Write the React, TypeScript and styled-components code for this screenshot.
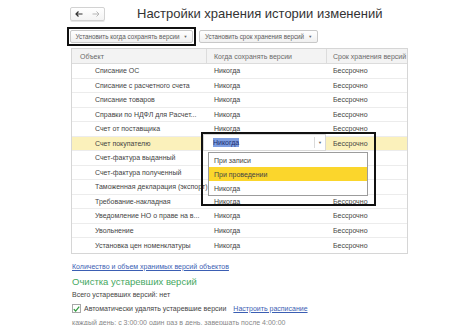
import React from "react";
import styled, { createGlobalStyle } from "styled-components";

const Global = createGlobalStyle`
  html, body { margin: 0; padding: 0; background: #fff; }
  body { font-family: "Liberation Sans", Arial, sans-serif; }
  * { box-sizing: border-box; }
`;

const Page = styled.div`
  width: 474px;
  height: 325px;
  overflow: hidden;
  padding: 6px 0 0 70px;
  display: flex;
  flex-direction: column;
  align-items: flex-start;
`;

const TopBar = styled.div`
  display: flex;
  align-items: center;
  height: 15px;
`;

const NavGroup = styled.div`
  display: flex;
  width: 35px;
  height: 14px;
  border: 1px solid #d2d2d2;
  border-radius: 2px;
  background: linear-gradient(#ffffff, #f3f3f3);
  box-shadow: 0 1px 0 #e6e6e6;
`;

const NavBtn = styled.span`
  flex: 1;
  display: flex;
  align-items: center;
  justify-content: center;
`;

const Title = styled.h1`
  margin: 0 0 0 32px;
  font-size: 13px;
  font-weight: normal;
  color: #333;
  white-space: nowrap;
`;

const Toolbar = styled.div`
  display: flex;
  align-items: center;
  gap: 3px;
  margin: 6px 0 0 -3px;
`;

const FocusBox = styled.div`
  display: flex;
  padding: 1px;
  border: 2px solid #111;
`;

const Button = styled.div<{ $w: number }>`
  width: ${(p) => p.$w}px;
  height: 13px;
  display: flex;
  align-items: center;
  justify-content: center;
  gap: 4px;
  border: 1px solid #c8c8c8;
  border-radius: 2px;
  background: linear-gradient(#ffffff, #f0f0f0);
  font-size: 6.3px;
  color: #5a5a5a;
  white-space: nowrap;
`;

const Caret = styled.span`
  font-size: 4px;
  color: #666;
`;

const TableWrap = styled.div`
  position: relative;
  margin: 2px 0 0 1px;
`;

const Table = styled.div`
  width: 337px;
  border: 1px solid #d6d6d6;
  display: flex;
  flex-direction: column;
`;

const Row = styled.div<{ $head?: boolean; $sel?: boolean }>`
  display: grid;
  grid-template-columns: 134px 120px 1fr;
  height: ${(p) => (p.$head ? "15px" : "14.5px")};
  border-bottom: 1px solid ${(p) => (p.$head ? "#dcdcdc" : "#ececec")};
  background: ${(p) => (p.$head ? "#f3f3f3" : p.$sel ? "#fbf1bb" : "#fff")};
  font-size: 7px;
  color: ${(p) => (p.$head ? "#6a6a6a" : "#444")};
  &:last-child { border-bottom: none; }
`;

const Cell = styled.div<{ $pad: number; $div?: boolean; $covered?: boolean }>`
  display: flex;
  align-items: center;
  padding-left: ${(p) => p.$pad}px;
  white-space: nowrap;
  border-left: ${(p) => (p.$div ? "1px solid #dcdcdc" : "none")};
  visibility: ${(p) => (p.$covered ? "hidden" : "visible")};
`;

const EditFrame = styled.div`
  position: absolute;
  left: 130px;
  top: 84px;
  width: 175px;
  height: 74px;
  border: 2px solid #111;
`;

const Input = styled.div`
  position: absolute;
  left: 0;
  top: 0;
  width: 123px;
  height: 17px;
  background: #fff;
  border: 1px solid #d8d8d8;
  display: flex;
  align-items: center;
  font-size: 7px;
`;

const InputText = styled.div`
  flex: 1;
  padding-left: 9px;
  display: flex;
  align-items: center;
`;

const Selected = styled.span`
  background: #7d9de0;
  color: #1c2d70;
  padding: 1px 0;
`;

const InputArrow = styled.div`
  width: 11px;
  height: 11px;
  border-left: 1px solid #dadada;
  display: flex;
  align-items: center;
  justify-content: center;
  font-size: 4px;
  color: #666;
`;

const List = styled.div`
  position: absolute;
  left: 5px;
  top: 18px;
  width: 160px;
  height: 44px;
  background: #fff;
  border: 1px solid #9c9c9c;
  display: flex;
  flex-direction: column;
  justify-content: center;
`;

const ListItem = styled.div<{ $active?: boolean }>`
  height: 14px;
  display: flex;
  align-items: center;
  padding-left: 5px;
  font-size: 7px;
  color: #444;
  background: ${(p) => (p.$active ? "#fbd62c" : "transparent")};
`;

const Bottom = styled.div`
  display: flex;
  flex-direction: column;
  margin: 7px 0 0 2px;
`;

const Link = styled.a<{ $gap?: number }>`
  font-size: 7px;
  color: #3b5eb3;
  text-decoration: underline;
  line-height: 12px;
  white-space: nowrap;
  cursor: pointer;
  margin-left: ${(p) => p.$gap ?? 0}px;
`;

const SectionTitle = styled.div`
  font-size: 9.5px;
  color: #45a861;
  line-height: 15px;
  margin-top: 1px;
`;

const Note = styled.div<{ $muted?: boolean }>`
  font-size: 7px;
  line-height: ${(p) => (p.$muted ? "13px" : "12px")};
  color: ${(p) => (p.$muted ? "#888" : "#444")};
  white-space: nowrap;
`;

const CheckLine = styled.div`
  display: flex;
  align-items: center;
  gap: 3px;
  height: 14px;
  margin-top: 1px;
  font-size: 7px;
  color: #444;
  white-space: nowrap;
`;

const Check = styled.span`
  width: 9px;
  height: 9px;
  border: 1px solid #a8a8a8;
  background: #fff;
  display: flex;
  align-items: center;
  justify-content: center;
`;

type R = { name: string; sel?: boolean; covered?: boolean };

const rows: R[] = [
  { name: "Списание ОС" },
  { name: "Списание с расчетного счета" },
  { name: "Списание товаров" },
  { name: "Справки по НДФЛ для Расчет..." },
  { name: "Счет от поставщика" },
  { name: "Счет покупателю", sel: true },
  { name: "Счет-фактура выданный", covered: true },
  { name: "Счет-фактура полученный", covered: true },
  { name: "Таможенная декларация (экспорт)", covered: true },
  { name: "Требование-накладная" },
  { name: "Уведомление НО о праве на в..." },
  { name: "Увольнение" },
  { name: "Установка цен номенклатуры" },
];

const Arrow = ({ dir, color }: { dir: "left" | "right"; color: string }) => (
  <svg width="8" height="6" viewBox="0 0 8 6">
    {dir === "left" ? (
      <path d="M7.5 3 H1 M3.5 0.5 L1 3 L3.5 5.5" fill="none" stroke={color} strokeWidth="1.2" />
    ) : (
      <path d="M0.5 3 H7 M4.5 0.5 L7 3 L4.5 5.5" fill="none" stroke={color} strokeWidth="1" />
    )}
  </svg>
);

export default function App() {
  return (
    <>
      <Global />
      <Page>
        <TopBar>
          <NavGroup>
            <NavBtn>
              <Arrow dir="left" color="#333" />
            </NavBtn>
            <NavBtn>
              <Arrow dir="right" color="#b5b5b5" />
            </NavBtn>
          </NavGroup>
          <Title>Настройки хранения истории изменений</Title>
        </TopBar>
        <Toolbar>
          <FocusBox>
            <Button $w={123}>
              Установить когда сохранять версии <Caret>▼</Caret>
            </Button>
          </FocusBox>
          <Button $w={119}>
            Установить срок хранения версий <Caret>▼</Caret>
          </Button>
        </Toolbar>
        <TableWrap>
          <Table>
            <Row $head>
              <Cell $pad={8}>Объект</Cell>
              <Cell $pad={7} $div>Когда сохранять версии</Cell>
              <Cell $pad={6} $div>Срок хранения версий</Cell>
            </Row>
            {rows.map((r) => (
              <Row key={r.name} $sel={r.sel}>
                <Cell $pad={23}>{r.name}</Cell>
                <Cell $pad={8} $covered={r.covered}>Никогда</Cell>
                <Cell $pad={7}>Бессрочно</Cell>
              </Row>
            ))}
          </Table>
          <EditFrame>
            <Input>
              <InputText>
                <Selected>Никогда</Selected>
              </InputText>
              <InputArrow>▼</InputArrow>
            </Input>
            <List>
              <ListItem>При записи</ListItem>
              <ListItem $active>При проведении</ListItem>
              <ListItem>Никогда</ListItem>
            </List>
          </EditFrame>
        </TableWrap>
        <Bottom>
          <Link>Количество и объем хранимых версий объектов</Link>
          <SectionTitle>Очистка устаревших версий</SectionTitle>
          <Note>Всего устаревших версий: нет</Note>
          <CheckLine>
            <Check>
              <svg width="9" height="8" viewBox="0 0 9 8">
                <path d="M1 4.2 L3.4 6.6 L8 1" fill="none" stroke="#2f9a3e" strokeWidth="1.6" />
              </svg>
            </Check>
            Автоматически удалять устаревшие версии
            <Link $gap={4}>Настроить расписание</Link>
          </CheckLine>
          <Note $muted>каждый день; с 3:00:00 один раз в день, завершать после 4:00:00</Note>
        </Bottom>
      </Page>
    </>
  );
}
